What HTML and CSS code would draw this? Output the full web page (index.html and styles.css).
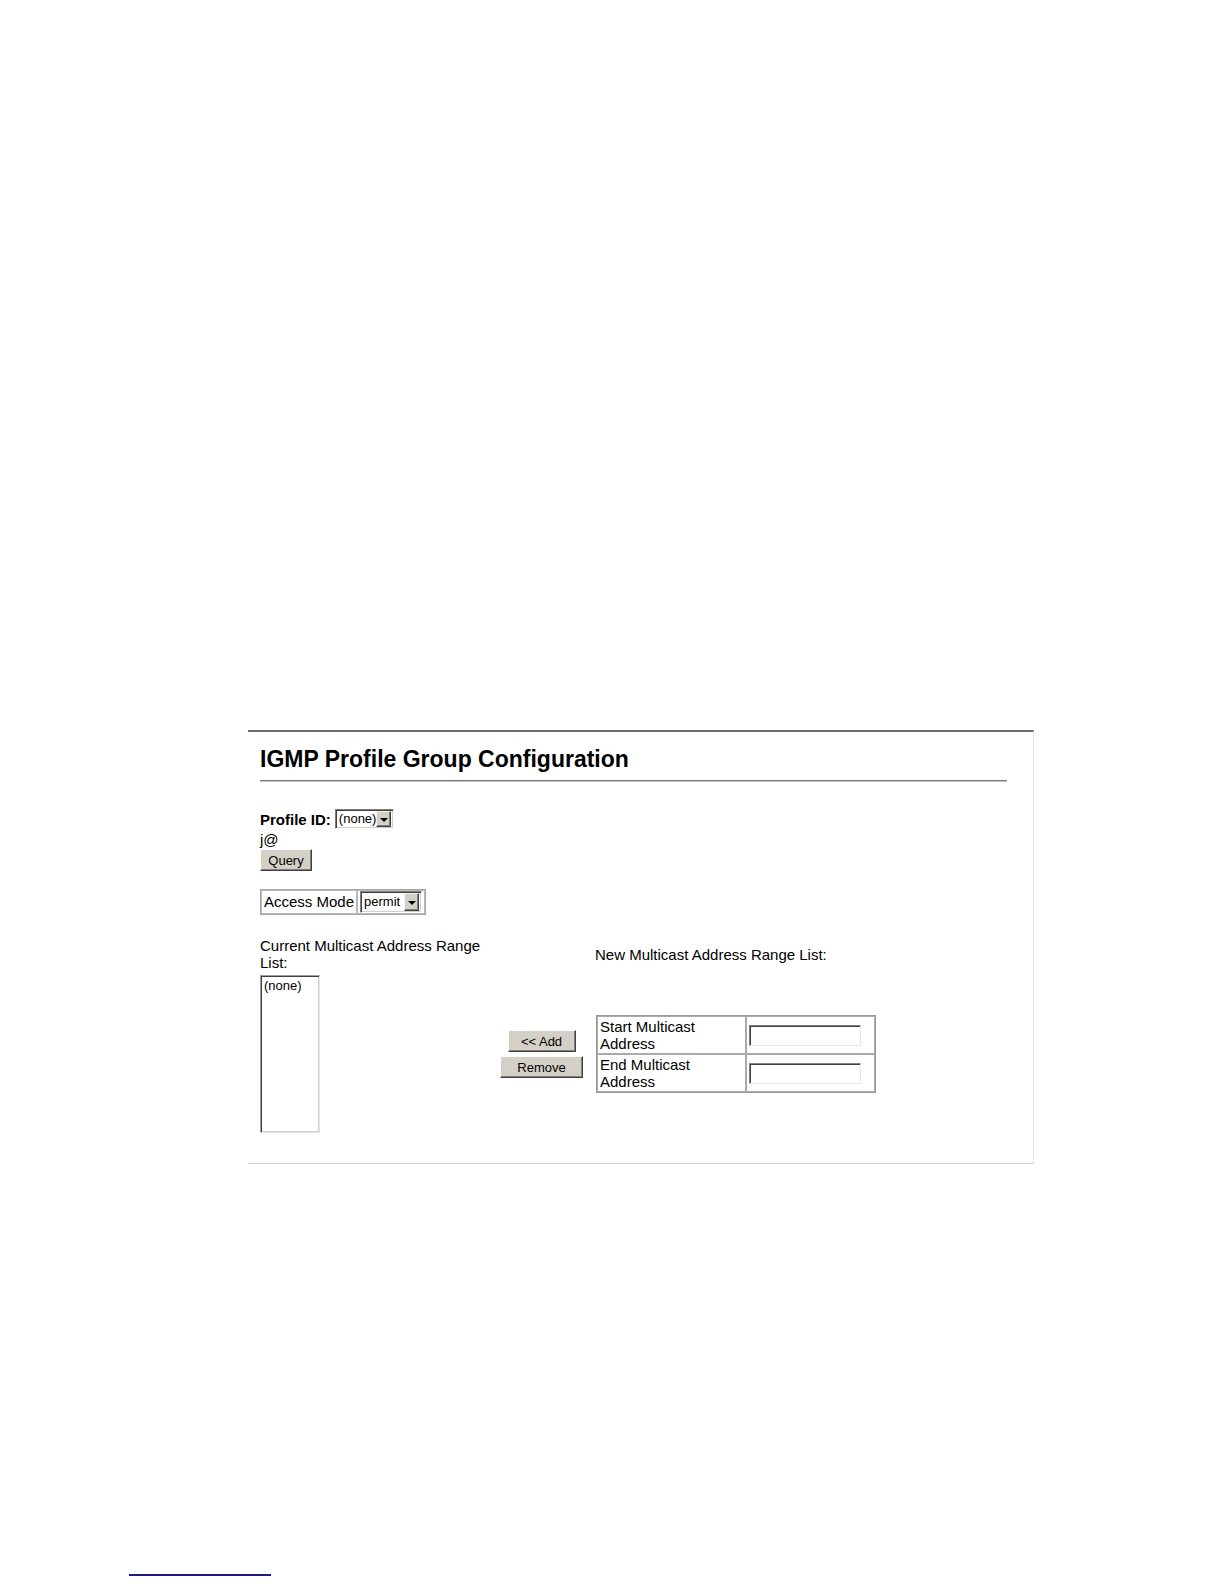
FILE: index.html
```html
<!DOCTYPE html>
<html>
<head>
<meta charset="utf-8">
<title>IGMP Profile Group Configuration</title>
<link rel="stylesheet" href="styles.css">
</head>
<body>
<div class="page">
  <div class="frame">
    <h1 class="title">IGMP Profile Group Configuration</h1>
    <div class="rule"></div>

    <div class="profile-row">
      <span class="label-bold">Profile ID:</span>
      <span class="select select-profile"><span class="select-text">(none)</span><span class="select-arrow"></span></span>
    </div>
    <div class="glyph-line">j@</div>
    <button class="btn btn-query" type="button">Query</button>

    <table class="mode-table">
      <tr>
        <td class="mode-label">Access Mode</td>
        <td class="mode-cell"><span class="select select-mode"><span class="select-text">permit</span><span class="select-arrow"></span></span></td>
      </tr>
    </table>

    <div class="ranges">
      <div class="current-label">Current Multicast Address Range List:</div>
      <div class="spacer"></div>
      <div class="new-label">New Multicast Address Range List:</div>

      <div class="listbox"><div class="listbox-item">(none)</div></div>
      <div class="btn-col">
        <button class="btn btn-add" type="button">&lt;&lt; Add</button>
        <button class="btn btn-remove" type="button">Remove</button>
      </div>
      <table class="addr-table">
        <tr>
          <td class="addr-label">Start Multicast Address</td>
          <td class="addr-field"><span class="textbox"></span></td>
        </tr>
        <tr>
          <td class="addr-label">End Multicast Address</td>
          <td class="addr-field"><span class="textbox"></span></td>
        </tr>
      </table>
    </div>
  </div>
  <div class="footer-rule"></div>
</div>
</body>
</html>
```

FILE: styles.css
```css
html, body {
  margin: 0;
  padding: 0;
  background: #ffffff;
}

body {
  font-family: "Liberation Sans", Arial, sans-serif;
  color: #000000;
}

.page {
  width: 1224px;
  min-height: 1584px;
  display: flow-root;
}

.frame {
  box-sizing: border-box;
  width: 786px;
  margin: 730px 0 0 248px;
  padding: 13px 0 30px 12px;
  border-top: 2px solid #6b6b6b;
  border-right: 1px solid #dedede;
  border-bottom: 1px solid #d0d0d0;
}

.title {
  margin: 0;
  font-size: 23px;
  line-height: 28px;
  font-weight: bold;
}

.rule {
  width: 747px;
  margin-top: 7px;
  border-top: 1px solid #7a7a7a;
  border-bottom: 1px solid #c4c4c4;
}

.profile-row {
  display: flex;
  align-items: center;
  gap: 4px;
  height: 20px;
  margin-top: 27px;
}

.label-bold {
  font-size: 15px;
  font-weight: bold;
}

.select {
  box-sizing: border-box;
  display: inline-flex;
  align-items: center;
  background: #ffffff;
  border: 1px solid;
  border-color: #808080 #ffffff #ffffff #808080;
  box-shadow: inset 1px 1px 0 #404040, inset -1px -1px 0 #d4d0c8;
  font-size: 13px;
}

.select-profile {
  width: 59px;
  height: 20px;
}

.select-mode {
  width: 62px;
  height: 22px;
}

.select-text {
  flex: 1;
  padding-left: 3px;
  line-height: 16px;
  white-space: nowrap;
}

.select-arrow {
  box-sizing: border-box;
  width: 15px;
  height: 16px;
  margin-right: 2px;
  background: #d4d0c8;
  border: 1px solid;
  border-color: #f4f4f4 #404040 #404040 #f4f4f4;
  box-shadow: inset -1px -1px 0 #808080;
  display: flex;
  align-items: center;
  justify-content: center;
}

.select-mode .select-arrow {
  height: 18px;
}

.select-arrow::after {
  content: "";
  width: 0;
  height: 0;
  border-left: 4px solid transparent;
  border-right: 4px solid transparent;
  border-top: 4px solid #000000;
  margin-top: 1px;
}

.glyph-line {
  margin-top: 2px;
  font-size: 15px;
  line-height: 17px;
}

.btn {
  box-sizing: border-box;
  display: block;
  margin: 0;
  padding: 0;
  height: 22px;
  font-family: "Liberation Sans", Arial, sans-serif;
  font-size: 13px;
  color: #000000;
  background: #d4d0c8;
  border: 1px solid;
  border-color: #ffffff #404040 #404040 #ffffff;
  box-shadow: inset -1px -1px 0 #808080;
  cursor: default;
}

.btn-query {
  width: 52px;
  margin-top: 1px;
}

.mode-table {
  margin-top: 18px;
  border-collapse: separate;
  border-spacing: 0;
  border: 1px solid #a8a8a8;
}

.mode-table td {
  border: 1px solid #b8b8b8;
  padding: 0 2px;
  vertical-align: middle;
}

.mode-label {
  font-size: 15px;
  line-height: 22px;
  white-space: nowrap;
}

.mode-cell .select {
  vertical-align: middle;
}

.ranges {
  display: grid;
  grid-template-columns: 240px 83px 1fr;
  row-gap: 4px;
  align-items: center;
  margin-top: 22px;
  font-size: 15px;
  line-height: 17px;
}

.current-label {
  width: 230px;
}

.new-label {
  padding-left: 12px;
}

.listbox {
  box-sizing: border-box;
  width: 60px;
  height: 158px;
  background: #ffffff;
  border: 1px solid;
  border-color: #a0a0a0 #e4e4e4 #e4e4e4 #a0a0a0;
  box-shadow: inset 1px 1px 0 #404040, inset -1px -1px 0 #d4d0c8;
  padding: 2px 3px;
}

.listbox-item {
  font-size: 13px;
  line-height: 15px;
}

.btn-col {
  display: flex;
  flex-direction: column;
  align-items: center;
  gap: 4px;
}

.btn-add {
  width: 68px;
}

.btn-remove {
  width: 83px;
}

.addr-table {
  width: 280px;
  margin-left: 13px;
  border-collapse: separate;
  border-spacing: 0;
  border: 1px solid #999999;
}

.addr-table td {
  border: 1px solid #aaaaaa;
  padding: 1px 2px;
  vertical-align: middle;
}

.addr-label {
  width: 143px;
  height: 34px;
}

.textbox {
  box-sizing: border-box;
  display: block;
  width: 112px;
  height: 21px;
  background: #ffffff;
  border: 1px solid;
  border-color: #808080 #e8e8e8 #e8e8e8 #808080;
  box-shadow: inset 1px 1px 0 #404040;
}

.footer-rule {
  width: 142px;
  height: 2px;
  margin: 410px 0 0 129px;
  background: #1c1c80;
}
```
